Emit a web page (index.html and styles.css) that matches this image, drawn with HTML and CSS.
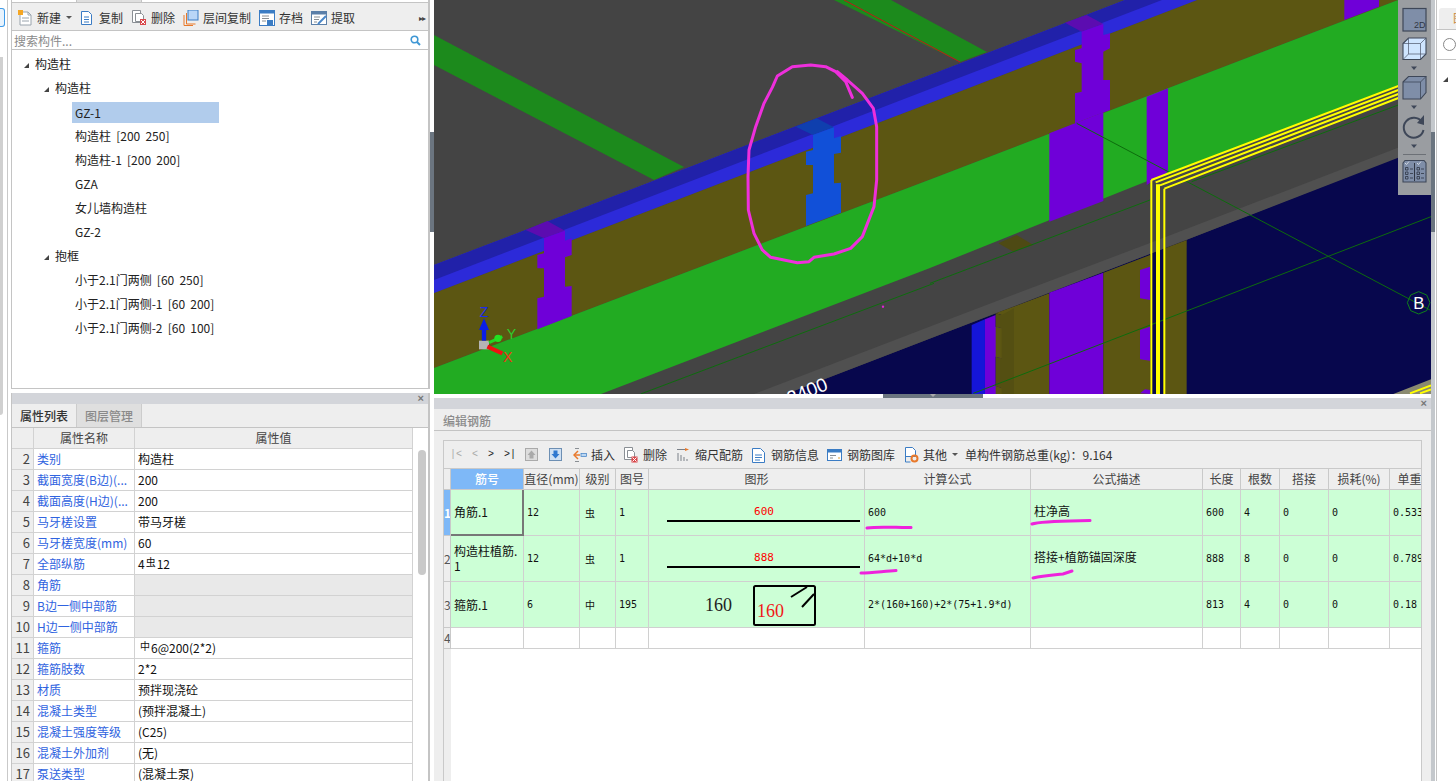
FILE: index.html
```html
<!DOCTYPE html>
<html lang="zh-CN">
<head>
<meta charset="utf-8">
<title>编辑钢筋</title>
<link rel="stylesheet" href="styles.css">
</head>
<body>
<div class="app">
  <aside class="strip">
    <div class="strip-btn"></div>
    <div class="strip-scroll"></div>
  </aside>

  <section class="left">
    <div class="tree-box">
      <div class="top-tabs"><span class="tt on"></span><span class="tt"></span></div>
      <div class="tool">
        <span class="ti first"><svg width="16" height="16" viewBox="0 0 16 16"><path d="M3 2h8l3 3v10H3z" fill="#fff" stroke="#9aa4ad"/><path d="M11 2v3h3M5 8h7M5 11h7" fill="none" stroke="#9aa4ad"/><rect x="1" y="0" width="5" height="5" fill="#f5a623"/></svg>新建</span>
        <span class="caret"></span>
        <span class="ti"><svg width="16" height="16" viewBox="0 0 16 16"><path d="M2.500 1.500h7l3 3v10h-10z" fill="#fff" stroke="#3b7cc4"/><path d="M5 7h5M5 9.500h5M5 12h5" stroke="#3b7cc4"/></svg>复制</span>
        <span class="ti"><svg width="16" height="16" viewBox="0 0 16 16"><path d="M1.500 .5h8v12h-8z" fill="#fff" stroke="#8a8f94"/><path d="M4.500 3.500h6l2 2v6h-8z" fill="#fff" stroke="#8a8f94"/><rect x="9" y="9" width="6" height="6" fill="#d9484c"/><path d="M10 10l4 4M14 10l-4 4" stroke="#fff"/></svg>删除</span>
        <span class="ti"><svg width="16" height="16" viewBox="0 0 16 16"><rect x="5" y="0" width="10" height="10" fill="#b9d6f7" stroke="#3b7cc4"/><path d="M3.500 3v11h9M1 5v10.500h9" fill="none" stroke="#e8792b"/></svg>层间复制</span>
        <span class="ti"><svg width="16" height="16" viewBox="0 0 16 16"><rect x=".5" y=".5" width="15" height="15" fill="#fff" stroke="#3b7cc4"/><rect x=".5" y=".5" width="15" height="3" fill="#3b7cc4"/><path d="M3 6h7M3 8.500h7M3 11h4" stroke="#8a8f94"/><rect x="8" y="10" width="6" height="5.500" fill="#3b7cc4"/></svg>存档</span>
        <span class="ti"><svg width="16" height="16" viewBox="0 0 16 16"><rect x=".5" y="1.500" width="15" height="13" fill="#fff" stroke="#5b7fa8"/><rect x=".5" y="1.500" width="15" height="3" fill="#5b7fa8"/><path d="M3 7h6M3 9.500h5M3 12h3" stroke="#8a8f94"/><path d="M7 14l8-8" stroke="#4a86c8" stroke-width="2"/></svg>提取</span>
        <span class="more">▸▸</span>
      </div>
      <div class="search">
        <span>搜索构件...</span>
        <svg width="11" height="11" viewBox="0 0 11 11"><circle cx="4.500" cy="4.500" r="3.300" fill="none" stroke="#3f97d4" stroke-width="1.600"/><path d="M7 7l3 3" stroke="#3f97d4" stroke-width="2"/></svg>
      </div>
      <ul class="tree">
        <li class="lv0"><i class="arrow"></i>构造柱</li>
        <li class="lv1"><i class="arrow"></i>构造柱</li>
        <li class="lv2"><span class="sel">GZ-1</span></li>
        <li class="lv2">构造柱 [200 250]</li>
        <li class="lv2">构造柱-1 [200 200]</li>
        <li class="lv2">GZA</li>
        <li class="lv2">女儿墙构造柱</li>
        <li class="lv2">GZ-2</li>
        <li class="lv1"><i class="arrow"></i>抱框</li>
        <li class="lv2">小于2.1门两侧 [60 250]</li>
        <li class="lv2">小于2.1门两侧-1 [60 200]</li>
        <li class="lv2">小于2.1门两侧-2 [60 100]</li>
      </ul>
    </div>
    <div class="prop-box">
      <div class="bar-head"><span class="close">×</span></div>
      <div class="prop-tabs"><span class="ptab on">属性列表</span><span class="ptab">图层管理</span></div>
      <div class="prop-body">
        <div class="prop-table">
          <div class="ph"></div><div class="ph">属性名称</div><div class="ph">属性值</div>
          <div class="pn">2</div><div class="pk">类别</div><div class="pv">构造柱</div>
          <div class="pn">3</div><div class="pk">截面宽度(B边)(...</div><div class="pv">200</div>
          <div class="pn">4</div><div class="pk">截面高度(H边)(...</div><div class="pv">200</div>
          <div class="pn">5</div><div class="pk">马牙槎设置</div><div class="pv">带马牙槎</div>
          <div class="pn">6</div><div class="pk">马牙槎宽度(mm)</div><div class="pv">60</div>
          <div class="pn">7</div><div class="pk">全部纵筋</div><div class="pv">4<sup class="bar-sym">虫</sup>12</div>
          <div class="pn">8</div><div class="pk">角筋</div><div class="pv off"></div>
          <div class="pn">9</div><div class="pk">B边一侧中部筋</div><div class="pv off"></div>
          <div class="pn">10</div><div class="pk">H边一侧中部筋</div><div class="pv off"></div>
          <div class="pn">11</div><div class="pk">箍筋</div><div class="pv"><sup class="bar-sym lead">中</sup>6@200(2*2)</div>
          <div class="pn">12</div><div class="pk">箍筋肢数</div><div class="pv">2*2</div>
          <div class="pn">13</div><div class="pk">材质</div><div class="pv">预拌现浇砼</div>
          <div class="pn">14</div><div class="pk">混凝土类型</div><div class="pv">(预拌混凝土)</div>
          <div class="pn">15</div><div class="pk">混凝土强度等级</div><div class="pv">(C25)</div>
          <div class="pn">16</div><div class="pk">混凝土外加剂</div><div class="pv">(无)</div>
          <div class="pn">17</div><div class="pk">泵送类型</div><div class="pv">(混凝土泵)</div>
        </div>
        <div class="prop-scroll"></div>
      </div>
    </div>
  </section>

  <div class="gutter"><div class="grip"></div></div>

  <main class="center">
    <div class="scene">
      <svg class="scene-svg" width="997" height="394" viewBox="0 0 997 394">
        <rect width="997" height="394" fill="#444"/>
        <polygon points="0,35 250,167 220,180 0,65" fill="#1c8a1c"/>
        <polygon points="400,0 457,0 553,52 526,62" fill="#1c8a1c"/>
        <path d="M410 0L526 62" stroke="#c01818" fill="none"/>
        <polygon points="352,394 500,337 752,240 964,157 997,145 997,394" fill="#07074d"/>
        <polygon points="320,394 500,325 716,243 997,135 997,145 752,240 500,337 352,394" fill="#505050"/>
        <polygon points="0,293 496,103 763,0 964,0 500,178 0,368" fill="#5c5612"/>
        <polygon points="0,265 496,75 691,0 728,0 763,0 496,103 0,293" fill="#2c2ad9"/>
        <polygon points="0,265 496,75 691,0 728,0 496,89 0,280" fill="#2121a9"/>
        <polygon points="0,368 500,178 964,0 997,0 997,74 734,173 716,180 496,268 167,394 0,394" fill="#22ab22"/>
        <g transform="scale(.33333)">
          <g id="col">
            <polygon points="275,690 340,663 393,692 330,715" fill="#5c0cb0"/>
            <polygon points="330,715 393,692 393,722 413,715 413,765 393,772 393,860 413,858 413,948 310,988 310,895 330,890 330,805 310,805 310,765 330,760" fill="#6f00d8"/>
          </g>
          <polygon points="1085,380 1148,355 1200,382 1137,405" fill="#0f3fae"/>
          <polygon points="1137,405 1200,382 1200,415 1221,408 1221,458 1200,462 1200,550 1221,548 1221,638 1116,678 1116,585 1137,580 1137,495 1116,495 1116,455 1137,450" fill="#1150d8"/>
          <circle cx="1347" cy="920" r="3.500" fill="#e025d8"/>
          <path d="M620 1182L1500 850" stroke="#0d6b0d" stroke-width="3" fill="none"/>
          <text class="dim" transform="translate(1068,1215) rotate(-22)">2400</text>
          <rect x="135" y="1022" width="30" height="26" fill="#b5b5b5"/>
          <path d="M150 1022V985" stroke="#0a1ee6" stroke-width="13" fill="none"/>
          <polygon points="135,990 165,990 150,955" fill="#0a1ee6"/>
          <path d="M165 1028L205 1010" stroke="#22d422" stroke-width="9" fill="none"/>
          <circle cx="192" cy="1015" r="11" fill="#22e022"/>
          <path d="M160 1040L205 1060" stroke="#ee1111" stroke-width="12" fill="none"/>
          <text class="axis" x="137" y="952" fill="#1a2cf0">Z</text>
          <text class="axis" x="218" y="1017" fill="#2ecf2e">Y</text>
          <text class="axis" x="207" y="1087" fill="#f03018">X</text>
        </g>
        <g transform="translate(496,0) scale(.33333)">
          <polygon points="125,975 165,958 165,1182 125,1182" fill="#1515d8"/>
          <polygon points="165,958 197,945 197,980 215,985 215,1075 197,1070 197,1158 215,1165 215,1182 165,1182" fill="#6f00d8"/>
          <polygon points="197,940 358,880 358,1182 197,1182 197,1158 215,1165 215,1075 197,1070 197,980 215,985 215,945" fill="#5c5612"/>
          <polygon points="215,945 252,925 252,1182 215,1182 215,1165 197,1158 197,1070 215,1075 215,985 197,980 197,940" fill="#544f12"/>
          <polygon points="358,878 520,818 520,1182 358,1182" fill="#6f00d8"/>
          <polygon points="520,818 660,765 660,1182 520,1182" fill="#5c5612"/>
          <polygon points="630,810 660,800 660,900 630,895" fill="#6f00d8"/>
          <polygon points="630,990 660,980 660,1082 630,1078" fill="#6f00d8"/>
          <polygon points="630,1180 645,1168 660,1170 660,1182" fill="#6f00d8"/>
          <polygon points="705,745 770,720 770,1182 705,1182" fill="#5c5612"/>
          <polygon points="405,68 470,45 520,72 455,95" fill="#5c0cb0"/>
          <polygon points="455,95 520,72 520,105 540,100 540,145 520,155 520,240 540,240 540,330 435,370 435,280 455,275 455,190 435,185 435,150 455,145" fill="#6f00d8"/>
          <polygon points="358,400 520,337 520,603 358,665" fill="#6f00d8"/>
          <polygon points="650,290 714,265 714,515 650,555" fill="#6f00d8"/>
          <polygon points="1243,60 1243,0 1347,0 1347,20" fill="#6f00d8"/>
          <polygon points="205,730 260,705 310,735 250,755" fill="#4e4a14"/>
          <path d="M440 370L1500 930M0 850L660 600M785 545L1405 315M130 1180L1503 650" stroke="#0d6b0d" stroke-width="3" fill="none"/>
          <polygon points="664,540 1405,255 1405,300 703,566" fill="#45454a"/>
          <path d="M664 540L1405 258M677 547L1405 270M690 556L1405 282M703 566L1405 294" stroke="#ffff00" stroke-width="6" fill="none"/>
          <path d="M664 540V1182M703 566V1182" stroke="#ffff00" stroke-width="6" fill="none"/>
          <path d="M684 553V1182" stroke="#ffff00" stroke-width="12" fill="none"/>
          <polygon points="1390,1182 1503,1138 1503,1182" fill="#8a8a70"/>
          <path d="M1440 1180L1503 1156M1470 1180L1503 1168" stroke="#ffff00" stroke-width="6" fill="none"/>
          <polygon points="1466,875 1490,885 1500,908 1490,932 1466,942 1442,932 1432,908 1442,885" fill="none" stroke="#0f7f1a" stroke-width="3"/>
          <text class="grid-b" x="1450" y="928">B</text>
        </g>
        <g transform="scale(.33333)">
          <path d="M1255 292L1235 245L1205 215L1175 200L1130 195L1075 200L1030 228L1015 262L990 310L965 380L945 450L942 530L943 630L960 700L985 750L1010 772L1090 788L1125 785L1140 772L1200 762L1250 745L1285 710L1320 620L1328 540L1328 380L1318 325L1285 280L1240 240L1210 215" fill="none" stroke="#ee2fdc" stroke-width="9" stroke-linejoin="round" stroke-linecap="round"/>
        </g>
      </svg>
      <svg class="view-tools" width="33" height="195" viewBox="0 0 33 195">
        <rect width="33" height="195" fill="#9a9da1"/>
        <rect x="5" y="8.500" width="23" height="22.500" fill="#7f8ea8" stroke="#3e4758" stroke-width="1.200"/>
        <text class="vt-label" x="16" y="28">2D</text>
        <path d="M5 43.500l5.500-5.500H28v16l-5.500 5.500H5z" fill="#cfe5ff" stroke="#3e4758" stroke-width="1.100"/>
        <path d="M5 43.500h17.500v16M22.500 43.500L28 38M10.500 38v16H28M10.500 54L5 59.500" fill="none" stroke="#4a5468" stroke-width=".7"/>
        <polygon points="13,66.500 19,66.500 16,70" fill="#3e4758"/>
        <path d="M5 82l5.500-5.500H28v16L22.500 99H5z" fill="#7f8ea8" stroke="#3e4758" stroke-width="1.100"/>
        <path d="M5 82h17.500v17M22.500 82L28 76.500" fill="none" stroke="#3e4758" stroke-width=".8"/>
        <polygon points="13,105.500 19,105.500 16,109" fill="#3e4758"/>
        <path d="M24 122a10 10 0 1 0 1.500 8" fill="none" stroke="#3e4758" stroke-width="2"/>
        <polygon points="26,115 26,125 19,123" fill="#3e4758"/>
        <polygon points="13,144.500 19,144.500 16,148" fill="#3e4758"/>
        <path d="M5 154.500h23" stroke="#6c7076"/>
        <path d="M5 163l2-2.500h19l2 2.500v19H5z" fill="#7f8ea8" stroke="#3e4758" stroke-width="1.100"/>
        <path d="M16.500 163v18" stroke="#2f3644"/>
        <path d="M7 163l1.500 1.500L11 161.500M19 163l1.500 1.500L23 161.500" fill="none" stroke="#e6eaf0" stroke-width=".8"/>
        <path d="M7.500 167.500h2.500v2.500H7.500zM7.500 172h2.500v2.500H7.500zM7.500 176.500h2.500V179H7.500zM19 167.500h2.500v2.500H19zM19 172h2.500v2.500H19zM19 176.500h2.500V179H19zM12 169h3M12 173.500h3M12 178h3M23 169h3M23 173.500h3M23 178h3" fill="none" stroke="#2f3644" stroke-width=".8"/>
      </svg>
    </div>
    <div class="splitter"><span class="split-handle"><i></i></span></div>
    <section class="edit">
      <div class="bar-head"><span class="close">×</span></div>
      <div class="edit-title">编辑钢筋</div>
      <div class="edit-body">
        <div class="frame">
          <div class="edit-tool">
            <span class="nav nav-first dim-nav">|&lt;</span><span class="nav dim-nav">&lt;</span><span class="nav">&gt;</span><span class="nav">&gt;|</span>
            <svg class="mv" width="13" height="13" viewBox="0 0 13 13"><rect x=".5" y=".5" width="12" height="12" fill="#ddd" stroke="#aaa"/><path d="M6.500 2.500l4 4.500H8.500v3.500h-4V7H2.500z" fill="#aaa"/></svg>
            <svg class="mv" width="13" height="13" viewBox="0 0 13 13"><rect x=".5" y=".5" width="12" height="12" fill="#cfe0f3" stroke="#6d8fb3"/><path d="M6.500 10.500l4-4.500H8.500V2.500h-4V6H2.500z" fill="#2f78d0"/></svg>
            <span class="ei w-ins"><svg width="14" height="16" viewBox="0 0 14 16"><path d="M5 4l-4 4 4 4" fill="none" stroke="#e8792b" stroke-width="1.500"/><path d="M1 8h6" stroke="#e8792b" stroke-width="1.500"/><rect x="8" y="6.500" width="5.500" height="3" fill="#bcd7f2" stroke="#3b7cc4" stroke-width=".7"/><path d="M2 1.500h4M2 14.500h4" stroke="#8a8f94"/></svg>插入</span>
            <span class="ei w-del"><svg width="15" height="16" viewBox="0 0 15 16"><path d="M1.500 .5h8v12h-8z" fill="#fff" stroke="#8a8f94"/><path d="M4.500 3.500h5l2 2v5h-7z" fill="#fff" stroke="#8a8f94"/><rect x="8.500" y="9.500" width="6" height="6" fill="#d9484c"/><path d="M9.500 10.500l4 4M13.500 10.500l-4 4" stroke="#fff"/></svg>删除</span>
            <span class="ei w-scale"><svg width="13" height="16" viewBox="0 0 13 16"><path d="M0 2.500h8M1 14V6M4 14V8M7 14V10M10 14v-2" stroke="#7a8088"/><path d="M8 1l4 1.500L8 4z" fill="#e8792b"/></svg>缩尺配筋</span>
            <span class="ei w-info"><svg width="13" height="16" viewBox="0 0 13 16"><path d="M.5 1.500h8l4 4v10H.5z" fill="#fff" stroke="#3b7cc4"/><path d="M3 8h7M3 10.500h7M3 13h5" stroke="#3b7cc4"/></svg>钢筋信息</span>
            <span class="ei w-lib"><svg width="15" height="16" viewBox="0 0 15 16"><rect x=".5" y="2.500" width="14" height="11" fill="#fff" stroke="#3b7cc4"/><rect x=".5" y="2.500" width="14" height="3" fill="#3b7cc4"/><path d="M3 8.500h6M3 11h3" stroke="#8a8f94"/><path d="M11 11h2" stroke="#e8a12b"/></svg>钢筋图库</span>
            <span class="ei w-oth"><svg width="15" height="16" viewBox="0 0 15 16"><path d="M1.500 .5h7l3 3v6h-10z" fill="#fff" stroke="#3b7cc4"/><path d="M1.500 9v6h5" fill="none" stroke="#3b7cc4"/><circle cx="10.500" cy="11.500" r="3" fill="none" stroke="#e8792b" stroke-width="2"/></svg>其他</span>
            <span class="caret c2"></span>
            <span class="total">单构件钢筋总重(kg)：9.164</span>
          </div>
          <div class="bars">
            <div class="h"></div><div class="h h-on">筋号</div><div class="h">直径(mm)</div><div class="h">级别</div><div class="h">图号</div><div class="h">图形</div><div class="h">计算公式</div><div class="h">公式描述</div><div class="h">长度</div><div class="h">根数</div><div class="h">搭接</div><div class="h">损耗(%)</div><div class="h">单重</div>

            <div class="rn rn-on">1</div><div class="c name cur">角筋.1</div><div class="c m">12</div><div class="c g">虫</div><div class="c m">1</div>
            <div class="c shape"><svg width="215" height="45" viewBox="0 0 215 45"><text class="len" x="115" y="25">600</text><path d="M18 31H211" stroke="#000" stroke-width="2"/></svg></div>
            <div class="c m">600</div><div class="c d">柱净高</div><div class="c m">600</div><div class="c m">4</div><div class="c m">0</div><div class="c m">0</div><div class="c m">0.533</div>

            <div class="rn">2</div><div class="c name tight">构造柱植筋.<br>1</div><div class="c m">12</div><div class="c g">虫</div><div class="c m">1</div>
            <div class="c shape"><svg width="215" height="45" viewBox="0 0 215 45"><text class="len" x="115" y="25">888</text><path d="M18 31H211" stroke="#000" stroke-width="2"/></svg></div>
            <div class="c m">64*d+10*d</div><div class="c d">搭接+植筋锚固深度</div><div class="c m">888</div><div class="c m">8</div><div class="c m">0</div><div class="c m">0</div><div class="c m">0.789</div>

            <div class="rn">3</div><div class="c name">箍筋.1</div><div class="c m">6</div><div class="c g">中</div><div class="c m">195</div>
            <div class="c shape"><svg width="215" height="45" viewBox="0 0 215 45"><text class="s160" x="56" y="29">160</text><rect x="105" y="4" width="61" height="39" rx="1.500" fill="none" stroke="#000" stroke-width="2"/><text class="s160 red" x="108" y="35">160</text><path d="M142 15L158 5M153 25L165 12" stroke="#000" stroke-width="2"/></svg></div>
            <div class="c m">2*(160+160)+2*(75+1.9*d)</div><div class="c d"></div><div class="c m">813</div><div class="c m">4</div><div class="c m">0</div><div class="c m">0</div><div class="c m">0.18</div>

            <div class="rn rn-low">4</div><div class="c e"></div><div class="c e"></div><div class="c e"></div><div class="c e"></div><div class="c e"></div><div class="c e"></div><div class="c e"></div><div class="c e"></div><div class="c e"></div><div class="c e"></div><div class="c e"></div><div class="c e"></div>
            <div class="rest"></div>
          </div>
        </div>
      </div>
    </section>
  </main>

  <div class="gutter light"><div class="grip"></div></div>

  <aside class="right">
    <div class="r-tab"><span>图</span></div>
    <div class="r-row"><i class="radio"></i></div>
    <div class="r-tree"><i class="arrow"></i></div>
  </aside>

  <svg class="marks" width="1456" height="781" viewBox="0 0 1456 781">
    <g fill="none" stroke="#ee22dc" stroke-width="3" stroke-linecap="round">
      <path d="M867 528C880 526 900 528 911 527.500"/>
      <path d="M861 573C872 573 885 571 896 570.500"/>
      <path d="M1032 524C1040 521 1065 521 1090 520.500"/>
      <path d="M1033 578C1045 575 1055 575 1063 574L1072 571"/>
    </g>
  </svg>
</div>
</body>
</html>
```
FILE: styles.css
```css
* { box-sizing: border-box; }
html, body { margin: 0; height: 100%; overflow: hidden; background: #fff; }
body { font: 12px/16px "Noto Sans CJK SC", "Noto Sans", sans-serif; color: #111; }
ul { list-style: none; margin: 0; padding: 0; }

.app {
  position: relative;
  display: grid;
  grid-template-columns: 11px 419px 4px 997px 5px 20px;
  width: 1456px;
  height: 781px;
  overflow: hidden;
}

/* far-left strip */
.strip { position: relative; display: flex; flex-direction: column; border-right: 1px solid #fff; background: linear-gradient(90deg, #fff 0 7px, #c9c9c9 7px 8px, #fff 8px); }
.strip-btn { width: 5px; height: 19px; margin-top: 8px; border: 1px solid #3f9be8; border-left: 0; border-radius: 0 3px 3px 0; background: #e8f3fd; }
.strip-scroll { width: 3px; height: 358px; margin-top: 30px; background: #d0d0d0; border-radius: 0 0 3px 0; }

/* left panel */
.left { display: flex; flex-direction: column; height: 781px; }
.tree-box { height: 389px; display: flex; flex-direction: column; border: 1px solid #c4c4c4; border-top: 0; border-right-width: 2px; }
.top-tabs { display: flex; height: 3px; border-bottom: 1px solid #c4c4c4; }
.tt { width: 65px; height: 2px; border-right: 1px solid #c4c4c4; }
.tt + .tt { background: #dfdfdf; }

.tool { display: flex; align-items: center; height: 28px; padding: 2px 0 0 5px; background: #eee; border-bottom: 1px solid #c4c4c4; color: #333; flex: none; }
.ti { display: inline-flex; align-items: center; gap: 4px; margin-right: 8px; }
.ti.first { margin-right: 5px; }
.ti svg { flex: none; }
.caret { width: 0; height: 0; margin-right: 7px; border: 3px solid transparent; border-top: 3px solid #555; border-bottom: 0; }
.more { margin-left: auto; margin-right: 3px; font-size: 8px; color: #444; letter-spacing: -1px; }

.search { display: flex; justify-content: space-between; align-items: center; height: 19px; padding: 1px 7px 0 2px; border-bottom: 1px solid #c4c4c4; color: #8a8a8a; flex: none; }

.tree { flex: 1; padding-top: 2px; color: #222; word-spacing: 2.5px; }
.tree li { position: relative; height: 24px; line-height: 24px; white-space: nowrap; }
.lv0 { padding-left: 23px; }
.lv1 { padding-left: 43px; }
.lv2 { padding-left: 63px; }
.arrow { display: inline-block; width: 0; height: 0; margin: 0 6px 1px -11px; border-style: solid; border-width: 0 0 5px 5px; border-color: transparent transparent #444 transparent; }
.sel { display: inline-block; width: 147px; height: 21px; line-height: 21px; margin: 2px 0 0 -3px; padding-left: 3px; background: #b1ccec; vertical-align: top; }

.prop-box { flex: 1; margin-top: 4px; display: flex; flex-direction: column; border-left: 1px solid #c4c4c4; border-right: 2px solid #c4c4c4; min-height: 0; }
.bar-head { display: flex; justify-content: flex-end; align-items: center; height: 11px; padding-right: 4px; background: #d3d5da; flex: none; }
.close { font: bold 11px/11px "Liberation Sans", sans-serif; color: #777; }
.prop-tabs { display: flex; height: 24px; background: #eee; border-bottom: 1px solid #c4c4c4; flex: none; }
.ptab { width: 65px; padding-left: 8px; line-height: 24px; font-weight: 500; color: #333; border-right: 1px solid #ccc; }
.ptab + .ptab { background: #dfdfdf; color: #8a8a8a; }
.prop-body { display: flex; flex: 1; min-height: 0; }
.prop-table { display: grid; grid-template-columns: 22px 101px 278px; grid-auto-rows: 21px; width: 401px; flex: none; }
.prop-table > div { padding-left: 3px; line-height: 20px; border-right: 1px solid #d2d2d2; border-bottom: 1px solid #d2d2d2; white-space: nowrap; overflow: hidden; }
.ph { background: #eee; text-align: center; color: #444; padding-left: 0 !important; }
.pn { background: #eee; color: #444; font-size: 13px; text-align: right; padding-right: 3px; }
.pk { color: #2f63e0; }
.pv { color: #111; }
.pv.off { background: #e9e9e9; }
.bar-sym { font-size: 10px; line-height: 0; vertical-align: 3px; margin: 0 1px; }
.bar-sym.lead { margin: 0 1px 0 2px; }
.prop-scroll { width: 8px; height: 125px; margin: 22px 0 0 5px; border-radius: 4px; background: #c9c9c9; flex: none; }

/* gutters */
.gutter { background: #fff; }
.gutter.light { background: #c4c8cc; border-right: 1px solid #fff; }
.grip { width: 100%; height: 100px; margin-top: 132px; background: #6b7580; }

/* centre */
.center { display: flex; flex-direction: column; height: 781px; min-width: 0; }
.scene { position: relative; height: 394px; overflow: hidden; flex: none; }
.scene-svg { display: block; }
.view-tools { position: absolute; top: 0; right: 0; display: block; }
.dim { font: 57px "Liberation Sans", sans-serif; fill: #fff; }
.axis { font: 42px "Liberation Sans", sans-serif; }
.grid-b { font: 50px "Liberation Sans", sans-serif; fill: #fff; }
.vt-label { font: 9px "Liberation Sans", sans-serif; fill: #2f3644; }

.splitter { height: 4px; display: flex; padding-left: 449px; background: #fff; flex: none; }
.split-handle { display: flex; justify-content: center; width: 100px; height: 4px; background: #6b7580; }
.split-handle i { width: 0; height: 0; border: 3px solid transparent; border-top: 3px solid #aaa; border-bottom: 0; }

.edit { flex: 1; display: flex; flex-direction: column; min-height: 0; background: #eee; }
.edit-title { height: 22px; padding-left: 9px; line-height: 23px; color: #8b8b8b; font-weight: 500; border-bottom: 1px solid #c4c4c4; flex: none; }
.edit-body { flex: 1; padding: 9px 9px 0; min-height: 0; display: flex; }
.frame { flex: 1; min-width: 0; display: flex; flex-direction: column; border: 1px solid #c9c9c9; border-bottom: 0; background: #fff; }
.edit-tool { display: flex; align-items: center; height: 28px; padding-left: 6px; background: #eee; border-bottom: 1px solid #c9c9c9; color: #333; white-space: nowrap; flex: none; }
.nav { width: 16px; font: 10px "Liberation Mono", monospace; color: #222; }
.nav-first { width: 22px; }
.dim-nav { color: #aaa; }
.mv { margin-left: 5px; margin-right: 11px; flex: none; }
.mv + .mv { margin-left: 0; margin-right: 11px; }
.ei { display: inline-flex; align-items: center; gap: 4px; }
.ei svg { flex: none; }
.w-ins { margin-right: 8px; }
.w-del { margin-right: 10px; gap: 5px; }
.w-scale { margin-right: 9px; gap: 5px; }
.w-info { margin-right: 8px; gap: 6px; }
.w-lib { margin-right: 9px; gap: 5px; }
.w-oth { margin-right: 5px; }
.c2 { margin-right: 7px; }
.total { color: #333; }

.bars { flex: 1; min-height: 0; display: grid; grid-template-columns: 7px 73px 56px 36px 33px 216px 166px 172px 38px 39px 49px 61px 40px; grid-template-rows: 21px 46px 46px 46px 21px 1fr; overflow: hidden; }
.h { background: #eee; color: #444; text-align: center; line-height: 20px; white-space: nowrap; border-right: 1px solid #c9c9c9; border-bottom: 1px solid #c9c9c9; }
.h-on { background: #7eb8f7; color: #fff; font-weight: 500; }
.rn { background: #eee; color: #555; font-size: 12px; line-height: 45px; text-align: center; border-right: 1px solid #c9c9c9; border-bottom: 1px solid #c9c9c9; overflow: hidden; }
.rn-on { background: #7eb8f7; color: #fff; font-weight: 700; }
.rn-low { line-height: 20px; }
.c { display: flex; align-items: center; padding-left: 3px; background: #ccffd6; color: #111; border-right: 1px solid #d0d0d0; border-bottom: 1px solid #d0d0d0; white-space: nowrap; overflow: hidden; min-width: 0; }
.m { font: 10px "DejaVu Sans Mono", monospace; }
.g { font-size: 10px; padding-left: 5px; }
.name { padding-left: 3px; }
.name.tight { line-height: 15px; padding-bottom: 2px; }
.cur { border-right: 2px solid #777; border-bottom: 2px solid #777; }
.d { padding-left: 3px; padding-bottom: 3px; }
.e { background: #fff; }
.shape { padding: 0; align-items: flex-start; }
.shape svg { display: block; }
.len { font: 11px "DejaVu Sans Mono", monospace; fill: #f00; text-anchor: middle; }
.s160 { font: 18px "Liberation Serif", serif; fill: #222; }
.s160.red { fill: #f01818; }
.rest { background: #eee; }

/* right panel */
.right { display: flex; flex-direction: column; overflow: hidden; border-left: 1px solid #c4c4c4; }
.r-tab { height: 30px; padding: 8px 0 0 2px; border-bottom: 1px solid #c4c4c4; flex: none; }
.r-tab span { display: block; height: 21px; padding-left: 14px; line-height: 20px; background: #eee; color: #c98a3a; border-radius: 3px 0 0 0; white-space: nowrap; overflow: hidden; }
.r-row { height: 30px; padding: 8px 0 0 6px; border-bottom: 1px solid #c4c4c4; flex: none; }
.radio { display: block; width: 13px; height: 13px; border: 1px solid #888; border-radius: 50%; }
.r-tree { flex: 1; padding: 9px 0 0 6px; }
.r-tree .arrow { margin: 0; }

/* hand-drawn annotation layer above the table */
.marks { position: absolute; top: 0; left: 0; pointer-events: none; }
```
